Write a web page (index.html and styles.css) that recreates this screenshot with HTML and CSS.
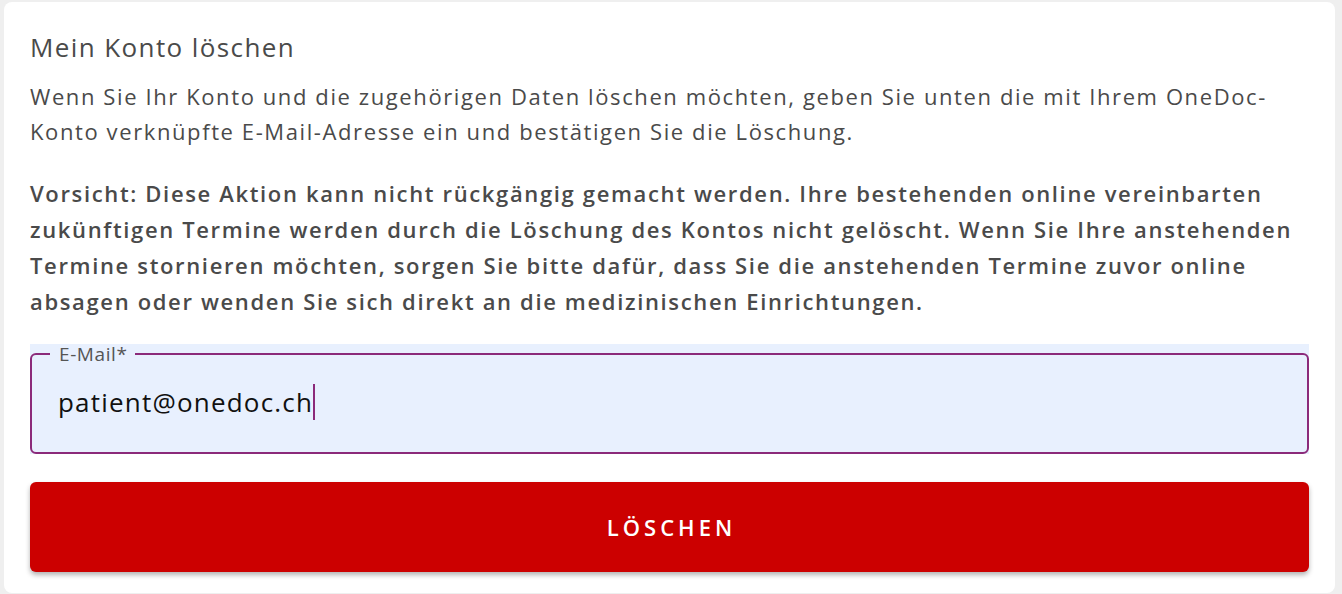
FILE: index.html
```html
<!DOCTYPE html>
<html lang="de">
<head>
    <meta charset="UTF-8">
    <meta name="viewport" content="width=device-width, initial-scale=1.0">
    <title>Mein Konto löschen</title>
    <link rel="stylesheet" href="styles.css">
</head>
<body>
    <div class="card">
        <h2 class="card-title">Mein Konto löschen</h2>
        <p class="intro">Wenn Sie Ihr Konto und die zugehörigen Daten löschen möchten, geben Sie unten die mit Ihrem OneDoc-Konto verknüpfte E-Mail-Adresse ein und bestätigen Sie die Löschung.</p>
        <p class="warning">Vorsicht: Diese Aktion kann nicht rückgängig gemacht werden. Ihre bestehenden online vereinbarten zukünftigen Termine werden durch die Löschung des Kontos nicht gelöscht. Wenn Sie Ihre anstehenden Termine stornieren möchten, sorgen Sie bitte dafür, dass Sie die anstehenden Termine zuvor online absagen oder wenden Sie sich direkt an die medizinischen Einrichtungen.</p>

        <div class="field">
            <fieldset class="field-box">
                <legend>E-Mail*</legend>
                <div class="field-value">patient@onedoc.ch<span class="caret"></span></div>
            </fieldset>
        </div>

        <button class="delete-button">LÖSCHEN</button>
    </div>
</body>
</html>
```

FILE: styles.css
```css
body {
    margin: 0;
    background-color: #efefef;
    font-family: "Open Sans", "Noto Sans", sans-serif;
    color: #4a4a4a;
}

.card {
    background-color: #ffffff;
    margin: 2px 7px 0 4px;
    border-radius: 8px;
    padding: 28px 26px 21px 26px;
}

.card-title {
    margin: 0;
    font-size: 26px;
    font-weight: normal;
    letter-spacing: 1.4px;
    line-height: 34px;
}

.intro {
    margin: 15px 0 0 0;
    font-size: 22px;
    letter-spacing: 1.6px;
    line-height: 35px;
}

.warning {
    margin: 26px 0 0 0;
    font-size: 22px;
    font-weight: 600;
    letter-spacing: 1.65px;
    line-height: 36px;
}

.field {
    margin-top: 25px;
    background-color: #e8f0fe;
    height: 110px;
}

.field-box {
    margin: 0;
    height: 100%;
    box-sizing: border-box;
    border: 2px solid #8b2a7a;
    border-radius: 6px;
    padding: 0 26px;
}

.field-box legend {
    font-size: 19px;
    letter-spacing: 0.6px;
    color: #555555;
    padding: 0 7px 0 9px;
    margin-left: -8px;
    line-height: 20px;
}

.field-value {
    font-size: 26px;
    letter-spacing: 1.2px;
    color: #111111;
    margin-top: 20px;
    line-height: 36px;
}

.caret {
    display: inline-block;
    width: 2px;
    height: 36px;
    background-color: #8b2a7a;
    vertical-align: -8px;
}

.delete-button {
    display: block;
    width: 100%;
    margin-top: 28px;
    height: 90px;
    border: none;
    border-radius: 6px;
    background-color: #cc0000;
    color: #ffffff;
    font-family: "Open Sans", "Noto Sans", sans-serif;
    font-size: 22px;
    font-weight: 600;
    letter-spacing: 4px;
    text-indent: 4px;
    box-shadow: 0 3px 5px rgba(0, 0, 0, 0.3);
    cursor: pointer;
}
```
